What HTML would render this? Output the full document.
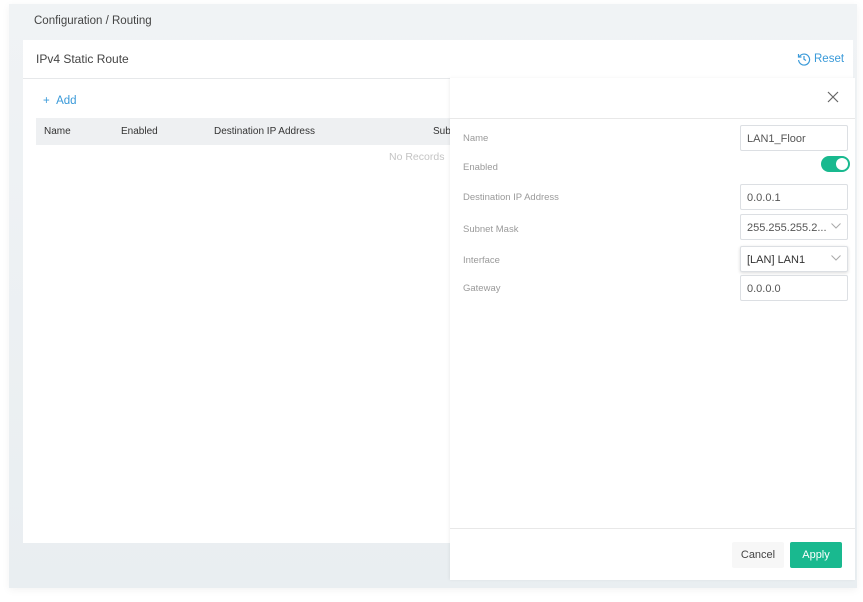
<!DOCTYPE html>
<html><head><meta charset="utf-8"><style>
*{box-sizing:border-box;margin:0;padding:0}
body{width:863px;height:602px;background:#fff;font-family:"Liberation Sans",sans-serif;position:relative;overflow:hidden}
.bg{position:absolute;left:9px;top:4px;width:848px;height:584px;background:linear-gradient(#f0f3f5,#e9eef1);box-shadow:0 2px 8px rgba(0,0,0,.05)}
.crumb{position:absolute;left:34px;top:15px;font-size:11.5px;color:#444}
.card{position:absolute;left:23px;top:40px;width:830px;height:503px;background:#fff}
.title{position:absolute;left:36px;top:52px;font-size:12px;color:#444}
.hl{position:absolute;left:23px;top:78px;width:830px;height:1px;background:#e6e8ea}
.reset{position:absolute;left:797px;top:52px;font-size:11.5px;color:#3a9ad9;display:flex;align-items:center;gap:3px}
.add{position:absolute;left:43px;top:95px;font-size:11.5px;color:#3a9ad9}
.th{position:absolute;left:36px;top:118px;width:420px;height:27px;background:#eef0f2;font-size:10px;color:#333}
.th span{position:absolute;top:8px}
.nr{position:absolute;left:389px;top:151px;font-size:10.5px;color:#c4c4c4}
.drawer{position:absolute;left:450px;top:78px;width:405px;height:502px;background:#fff;box-shadow:-1px 0 3px rgba(0,0,0,.06)}
.x{position:absolute;left:827px;top:91px}
.dl{position:absolute;left:450px;top:118px;width:405px;height:1px;background:#e8e8e8}
.fl{position:absolute;left:450px;top:528px;width:405px;height:1px;background:#e8e8e8}
.lbl{position:absolute;left:463px;font-size:9.5px;color:#9a9a9a}
.inp{position:absolute;left:740px;width:108px;height:26px;border:1px solid #dcdfe3;border-radius:2px;font-size:11px;color:#555;padding:7px 0 0 6px}
.chev{position:absolute;right:6px;top:8px}
.tog{position:absolute;left:821px;top:156px;width:29px;height:16px;border-radius:8px;background:#19b98f}
.tog:after{content:"";position:absolute;right:2px;top:2px;width:12px;height:12px;border-radius:50%;background:#fff}
.cancel{position:absolute;left:732px;top:542px;width:52px;height:26px;background:#f7f7f7;border-radius:2px;font-size:11px;color:#444;text-align:center;line-height:27px}
.apply{position:absolute;left:790px;top:542px;width:52px;height:26px;background:#19b98f;border-radius:2px;font-size:11px;color:#fff;text-align:center;line-height:27px}
</style></head><body>
<div class="bg"></div>
<div class="crumb">Configuration / Routing</div>
<div class="card"></div>
<div class="title">IPv4 Static Route</div>
<div class="hl"></div>
<div class="reset"><svg width="14" height="14" viewBox="0 0 14 14" fill="none" stroke="#3a9ad9" stroke-width="1.2"><path d="M2.5 4.5A5.5 5.5 0 1 1 1.6 8"/><path d="M1.5 2v3h3"/><path d="M7 4v3.3l2 1.2"/></svg>Reset</div>
<div class="add">+ &nbsp;Add</div>
<div class="th"><span style="left:8px">Name</span><span style="left:85px">Enabled</span><span style="left:178px">Destination IP Address</span><span style="left:397px">Sub</span></div>
<div class="nr">No Records</div>
<div class="drawer"></div>
<svg class="x" width="12" height="12" viewBox="0 0 12 12" stroke="#666" stroke-width="1.2"><path d="M1 1L11 11M11 1L1 11"/></svg>
<div class="dl"></div>
<div class="lbl" style="top:133px">Name</div>
<div class="inp" style="top:125px">LAN1_Floor</div>
<div class="lbl" style="top:162px">Enabled</div>
<div class="tog"></div>
<div class="lbl" style="top:192px">Destination IP Address</div>
<div class="inp" style="top:184px">0.0.0.1</div>
<div class="lbl" style="top:224px">Subnet Mask</div>
<div class="inp" style="top:214px">255.255.255.2...<svg class="chev" width="10" height="6" viewBox="0 0 10 6" fill="none" stroke="#aaa"><path d="M0.5 0.5L5 5L9.5 0.5"/></svg></div>
<div class="lbl" style="top:255px">Interface</div>
<div class="inp" style="top:246px;box-shadow:0 1px 3px rgba(0,0,0,.15);color:#333">[LAN] LAN1<svg class="chev" width="10" height="6" viewBox="0 0 10 6" fill="none" stroke="#aaa"><path d="M0.5 0.5L5 5L9.5 0.5"/></svg></div>
<div class="lbl" style="top:283px">Gateway</div>
<div class="inp" style="top:275px">0.0.0.0</div>
<div class="fl"></div>
<div class="cancel">Cancel</div>
<div class="apply">Apply</div>
</body></html>
